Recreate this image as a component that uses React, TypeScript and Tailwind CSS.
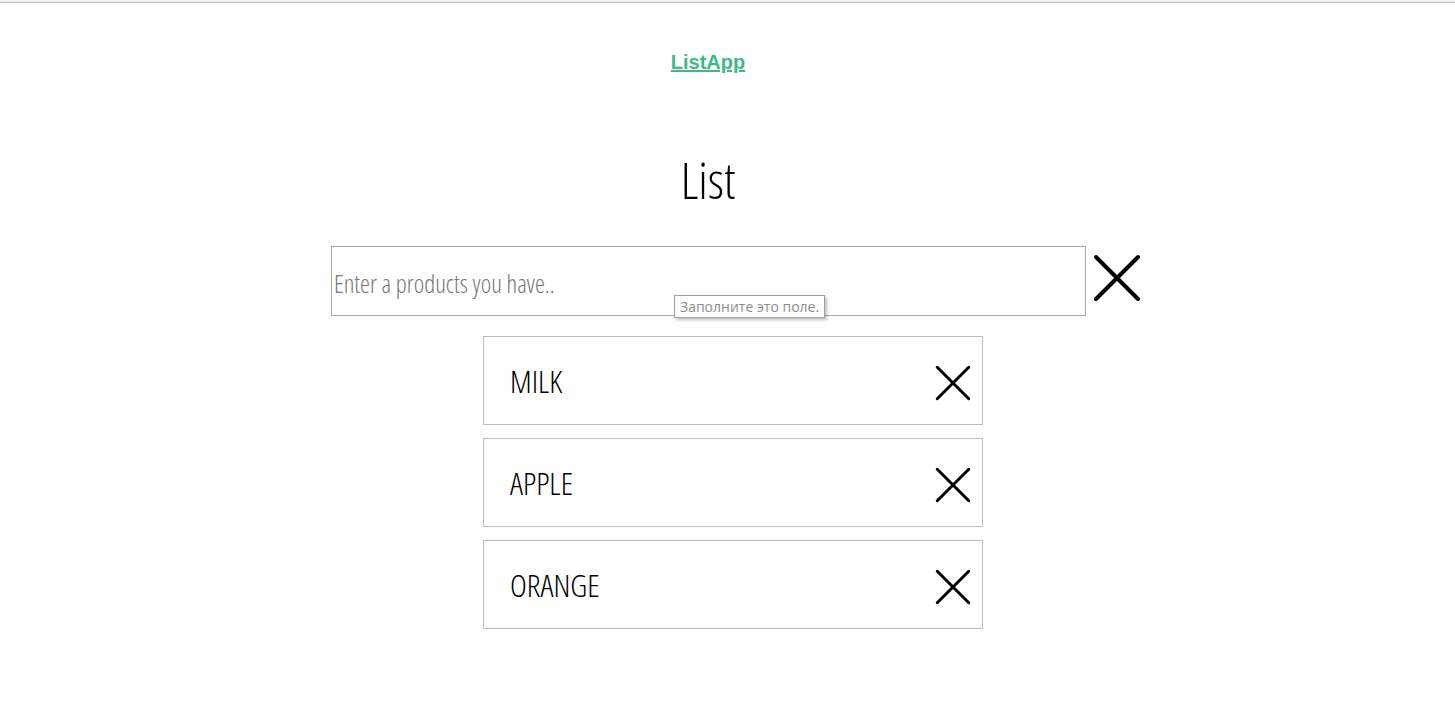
import React from "react";

const items = ["MILK", "APPLE", "ORANGE"];

function Cross({ size, stroke }: { size: number; stroke: number }) {
  return (
    <svg width={size} height={size} viewBox="0 0 48 48" fill="none" stroke="#000" strokeWidth={stroke} strokeLinecap="round">
      <path d="M3 3L45 45M45 3L3 45" />
    </svg>
  );
}

export default function App() {
  return (
    <div className="relative min-h-[715px] w-[1455px] bg-white font-['Open_Sans',sans-serif] [font-stretch:75%]">
      <div className="h-[2px] bg-[#f2f2f2]" />
      <div className="h-px bg-[#b8b8b8]" />
      <div className="pt-[44px] pr-[39px] text-center">
        <a href="#" className="font-['Liberation_Sans',Arial,sans-serif] text-[20px] font-bold text-[#3fba84] underline [font-stretch:100%]">
          ListApp
        </a>
      </div>

      <h1 className="mt-[73px] pr-[39px] text-center text-[50px] font-light leading-[60px] text-black">List</h1>

      <div className="relative mt-[36px] ml-[331px] flex items-start gap-[7px]">
        <input
          type="text"
          placeholder="Enter a products you have.."
          className="h-[70px] w-[755px] border border-[#a9a9a9] px-[2px] pt-[3px] text-[25px] font-light text-black outline-none placeholder:text-[#777]"
        />
        <button type="button" className="mt-[8px] flex h-[48px] w-[48px] items-center justify-center">
          <Cross size={48} stroke={4} />
        </button>
        <div className="absolute top-[49px] left-[343px] h-[23px] border border-[#a0a0a0] bg-white px-[5px] font-['Open_Sans',sans-serif] text-[14px] leading-[21px] text-[#8c8c8c] shadow-[2px_2px_3px_rgba(0,0,0,0.25)] [font-stretch:100%]">
          Заполните это поле.
        </div>
      </div>

      <ul className="mt-[20px] ml-[483px] flex w-[500px] flex-col gap-[13px]">
        {items.map((item) => (
          <li key={item} className="flex h-[89px] items-center justify-between border border-[#bdbdbd] pr-[11px] pl-[26px]">
            <span className="text-[32px] font-light text-black">{item}</span>
            <button type="button" className="mt-[4px] flex h-[37px] w-[37px] items-center justify-center">
              <Cross size={36} stroke={4} />
            </button>
          </li>
        ))}
      </ul>
    </div>
  );
}
